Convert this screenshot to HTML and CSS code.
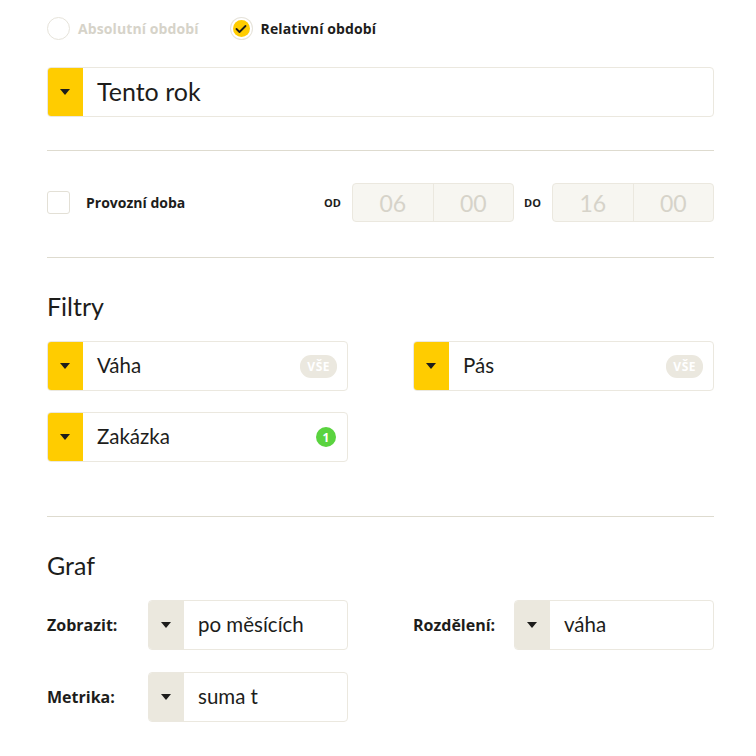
FILE: index.html
```html
<!DOCTYPE html>
<html lang="cs">
<head>
  <meta charset="UTF-8" />
  <title>Nastavení reportu</title>
  <link rel="stylesheet" href="styles.css">
</head>
<body>
  <div class="panel">
    <!-- typ obdobi -->
    <div class="radio-row">
      <label class="radio">
        <span class="radio-dot"></span>
        <span class="radio-label">Absolutní období</span>
      </label>
      <label class="radio checked">
        <span class="radio-dot">
          <svg width="12" height="10" viewBox="0 0 12 10"><path d="M1.5 5 L4.5 8 L10.5 2" fill="none" stroke="#1d1d1b" stroke-width="1.8" stroke-linecap="round" stroke-linejoin="round"/></svg>
        </span>
        <span class="radio-label">Relativní období</span>
      </label>
    </div>

    <div class="select big">
      <div class="select-arrow"><span class="caret"></span></div>
      <div class="select-value">Tento rok</div>
    </div>

    <hr class="divider first">

    <!-- provozni doba -->
    <div class="hours-row">
      <span class="checkbox"></span>
      <span class="hours-label">Provozní doba</span>
      <span class="time-label">OD</span>
      <div class="time-box">
        <span>06</span>
        <span>00</span>
      </div>
      <span class="time-label">DO</span>
      <div class="time-box">
        <span>16</span>
        <span>00</span>
      </div>
    </div>

    <hr class="divider second">

    <h2>Filtry</h2>
    <div class="filter-grid">
      <div class="select">
        <div class="select-arrow"><span class="caret"></span></div>
        <div class="select-value">Váha</div>
        <span class="badge">VŠE</span>
      </div>
      <div class="select">
        <div class="select-arrow"><span class="caret"></span></div>
        <div class="select-value">Pás</div>
        <span class="badge">VŠE</span>
      </div>
      <div class="select">
        <div class="select-arrow"><span class="caret"></span></div>
        <div class="select-value">Zakázka</div>
        <span class="count">1</span>
      </div>
    </div>

    <hr class="divider wide">

    <h2>Graf</h2>
    <div class="graph-grid">
      <div class="field">
        <span class="field-label">Zobrazit:</span>
        <div class="select plain">
          <div class="select-arrow"><span class="caret"></span></div>
          <div class="select-value">po měsících</div>
        </div>
      </div>
      <div class="field">
        <span class="field-label">Rozdělení:</span>
        <div class="select plain">
          <div class="select-arrow"><span class="caret"></span></div>
          <div class="select-value">váha</div>
        </div>
      </div>
      <div class="field">
        <span class="field-label">Metrika:</span>
        <div class="select plain">
          <div class="select-arrow"><span class="caret"></span></div>
          <div class="select-value">suma t</div>
        </div>
      </div>
    </div>
  </div>
</body>
</html>
```

FILE: styles.css
```css
body {
  margin: 0;
  background: #ffffff;
  color: #1d1d1b;
  font-family: Lato, "Open Sans", sans-serif;
}

.panel {
  padding: 17px 42px 0 47px;
}

/* radio buttons */
.radio-row {
  display: flex;
  gap: 31px;
  height: 23px;
  margin-bottom: 27px;
}

.radio {
  display: flex;
  align-items: center;
  gap: 8px;
}

.radio-dot {
  width: 21px;
  height: 21px;
  border: 1px solid #e6e3da;
  border-radius: 50%;
  display: flex;
  align-items: center;
  justify-content: center;
}

.radio.checked .radio-dot {
  background: #ffcc00;
  box-shadow: 0 0 0 2px #fff, 0 0 0 3px #e6e3da;
  width: 17px;
  height: 17px;
  border: none;
  margin: 0 3px;
}

.radio-label {
  font-family: "Open Sans", sans-serif;
  font-size: 14px;
  font-weight: 700;
  letter-spacing: 0.1px;
  color: #d6d3c9;
}

.radio.checked .radio-label {
  color: #1d1d1b;
}

/* selects */
.select {
  display: flex;
  align-items: center;
  height: 48px;
  border: 1px solid #ebe8df;
  border-radius: 4px;
  overflow: hidden;
  padding-right: 10px;
}

.select-arrow {
  align-self: stretch;
  width: 36px;
  background: #ffcc00;
  display: flex;
  align-items: center;
  justify-content: center;
  margin: -1px 0 -1px -1px;
}

.select.plain .select-arrow {
  background: #ebe8de;
}

.caret {
  width: 0;
  height: 0;
  border-left: 5px solid transparent;
  border-right: 5px solid transparent;
  border-top: 6px solid #1d1d1b;
}

.select-value {
  flex: 1;
  padding-left: 14px;
  font-size: 20.5px;
  padding-bottom: 3px;
}

.select.big .select-value {
  font-size: 25px;
}

.badge {
  background: #ebe8df;
  color: #fff;
  font-family: "Open Sans", sans-serif;
  font-size: 12px;
  font-weight: 700;
  border-radius: 11px;
  padding: 3px 7px;
  letter-spacing: 0.5px;
}

.count {
  width: 20px;
  height: 20px;
  border-radius: 50%;
  background: #5ad33f;
  color: #fff;
  font-family: "Open Sans", sans-serif;
  font-size: 12px;
  font-weight: 700;
  display: flex;
  align-items: center;
  justify-content: center;
  margin-right: 1px;
}

.divider {
  border: none;
  border-top: 1px solid #dedbcf;
  margin: 32px 0;
}

.divider.first {
  margin: 33px 0 32px;
}

.divider.second {
  margin: 35px 0 33px;
}

.divider.wide {
  margin: 54px 0 33px;
}

/* provozni doba */
.hours-row {
  display: flex;
  align-items: center;
  height: 39px;
}

.checkbox {
  width: 21px;
  height: 21px;
  border: 1px solid #e3e0d6;
  border-radius: 3px;
  margin-right: 16px;
}

.hours-label {
  font-family: "Open Sans", sans-serif;
  font-size: 14px;
  font-weight: 700;
  flex: 1;
}

.time-label {
  font-family: "Open Sans", sans-serif;
  font-size: 11px;
  font-weight: 700;
  width: 28px;
}

.time-box {
  display: flex;
  width: 160px;
  height: 37px;
  border: 1px solid #ebe8df;
  border-radius: 4px;
  background: #f7f6f1;
  margin-right: 10px;
}

.time-box:last-child {
  margin-right: 0;
}

.time-box span {
  flex: 1;
  display: flex;
  align-items: center;
  justify-content: center;
  font-size: 23px;
  color: #d6d3c9;
}

.time-box span + span {
  border-left: 1px solid #ebe8df;
}

h2 {
  font-size: 25px;
  font-weight: 400;
  margin: 0 0 20px;
  line-height: 30px;
}

.filter-grid {
  display: grid;
  grid-template-columns: 301px 301px;
  justify-content: space-between;
  row-gap: 21px;
}

.graph-grid {
  display: grid;
  grid-template-columns: 301px 301px;
  justify-content: space-between;
  row-gap: 22px;
}

.field {
  display: flex;
  align-items: center;
}

.field-label {
  width: 101px;
  font-family: "Open Sans", sans-serif;
  font-size: 16px;
  font-weight: 700;
}

.field .select {
  flex: 1;
}
```
